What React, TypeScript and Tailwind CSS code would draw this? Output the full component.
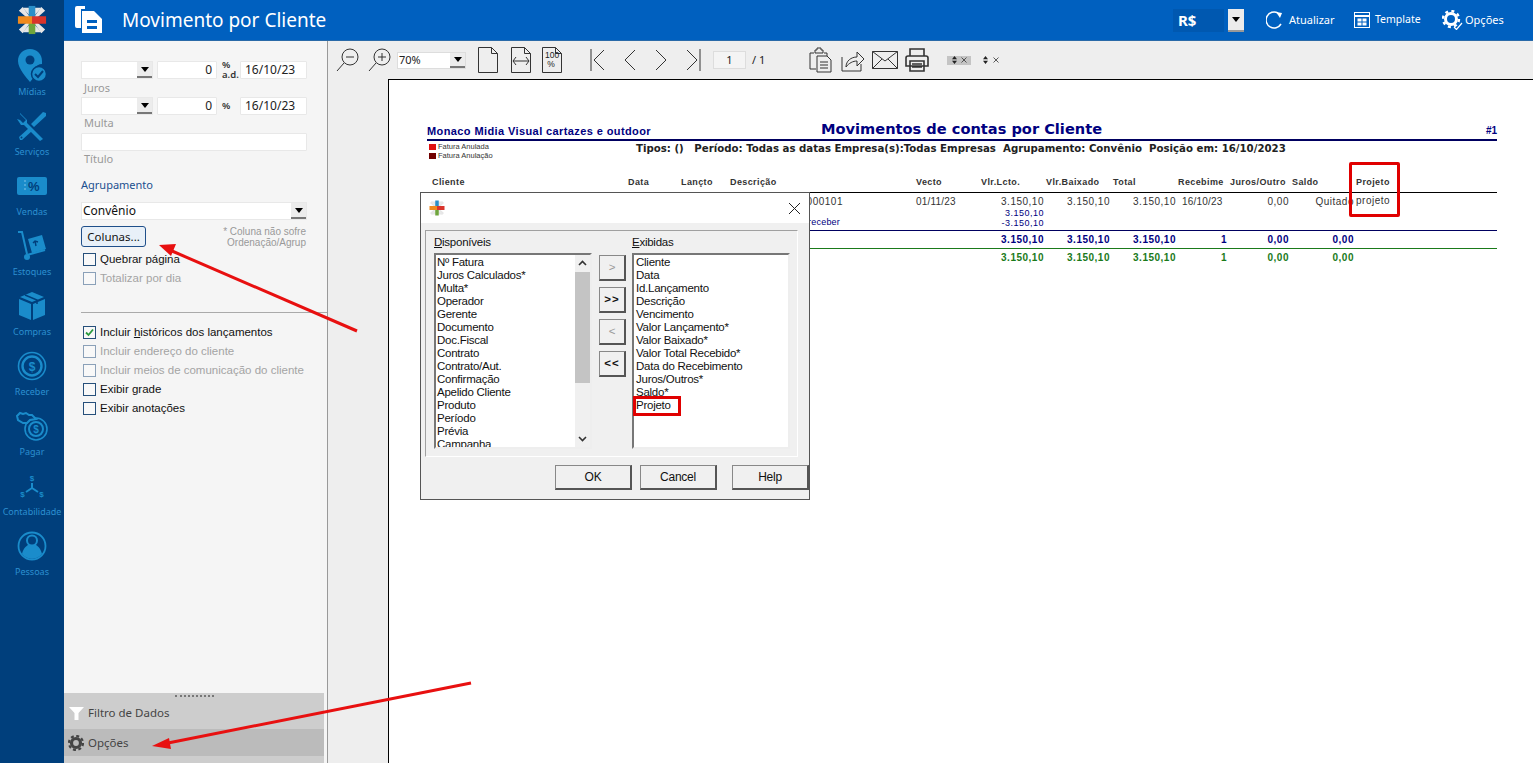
import React from "react";

const Logo = ({ s = 32 }: { s?: number }) => (
  <svg width={s} height={s} viewBox="0 0 32 32">
    <g fill="#e6e6e6">
      <path d="M6 3 L13 3 L15 13 Z M26 3 L19 3 L17 13 Z M6 29 L13 29 L15 19 Z M26 29 L19 29 L17 19 Z" />
      <path d="M2 6 L6 2 L14 13 L10 13 Z M30 6 L26 2 L18 13 L22 13 Z M2 26 L6 30 L14 19 L10 19 Z M30 26 L26 30 L18 19 L22 19 Z" />
    </g>
    <rect x="12.5" y="1" width="7" height="12" fill="#2a8fc8" />
    <rect x="12.5" y="19" width="7" height="12" fill="#6fa53c" />
    <rect x="1" y="12" width="15" height="8" fill="#f08a1d" />
    <rect x="16" y="12" width="15" height="8" fill="#d9342b" />
  </svg>
);

const C = "#1a8ccb";
const side: { label: string; icon: React.ReactNode }[] = [
  {
    label: "Mídias",
    icon: (
      <svg width="30" height="34" viewBox="0 0 30 34">
        <path fill={C} d="M13 0C6 0 1 5 1 12c0 8 9 17 12 21l4-5a9 9 0 0 1 8-13c0-1 0-2 0-3C25 5 20 0 13 0z" />
        <circle cx="13" cy="11" r="4.5" fill="#003f7c" />
        <circle cx="22" cy="25" r="7.5" fill={C} stroke="#003f7c" strokeWidth="1.5" />
        <path d="M18 25l3 3 5-6" fill="none" stroke="#003f7c" strokeWidth="2" />
      </svg>
    ),
  },
  {
    label: "Serviços",
    icon: (
      <svg width="30" height="30" viewBox="0 0 30 30">
        <path fill={C} d="M3 2l7 7 0 3 16 16-3 2L7 14H4L0 8l3 1 3 3 3-3-3-3-3-3z" />
        <path fill={C} d="M29 2l-3-1-12 12 3 3L29 5z M12 17L2 26l1 3 2 0 10-9z" />
        <circle cx="4.5" cy="26.5" r="1" fill="#003f7c" />
      </svg>
    ),
  },
  {
    label: "Vendas",
    icon: (
      <svg width="30" height="18" viewBox="0 0 30 18">
        <rect width="30" height="18" rx="2" fill={C} />
        <path d="M8 3v12" stroke="#7fc4e8" strokeDasharray="2 2" />
        <text x="11" y="14" fontSize="13" fontWeight="700" fill="#003f7c" fontFamily="'Liberation Sans',sans-serif">%</text>
      </svg>
    ),
  },
  {
    label: "Estoques",
    icon: (
      <svg width="30" height="30" viewBox="0 0 30 30">
        <path d="M1 1h4l5 22" stroke={C} strokeWidth="2" fill="none" />
        <path d="M10 24l18-5" stroke={C} strokeWidth="2" />
        <circle cx="10" cy="26" r="3" fill={C} />
        <path fill={C} d="M11 8l14-4 4 14-14 4z" />
        <path d="M19 15l-1-5m-2 2l2-2 3 1" stroke="#003f7c" strokeWidth="1.4" fill="none" />
      </svg>
    ),
  },
  {
    label: "Compras",
    icon: (
      <svg width="26" height="28" viewBox="0 0 26 28">
        <path fill={C} d="M0 7l12 5v16L0 23zM26 7l-12 5v16l12-5zM1 5l12-5 12 5-12 5z" />
        <path d="M6 3l12 5v4" stroke="#003f7c" strokeWidth="1.5" fill="none" />
      </svg>
    ),
  },
  {
    label: "Receber",
    icon: (
      <svg width="30" height="30" viewBox="0 0 30 30">
        <circle cx="15" cy="15" r="13.5" fill="none" stroke={C} strokeWidth="1.6" />
        <circle cx="15" cy="15" r="9.5" fill="none" stroke={C} strokeWidth="2.4" />
        <text x="15" y="19.5" textAnchor="middle" fontSize="12" fontWeight="700" fill={C} fontFamily="'Liberation Sans',sans-serif">$</text>
      </svg>
    ),
  },
  {
    label: "Pagar",
    icon: (
      <svg width="32" height="30" viewBox="0 0 32 30">
        <circle cx="20" cy="18" r="11" fill="none" stroke={C} strokeWidth="1.6" />
        <circle cx="20" cy="18" r="7" fill="none" stroke={C} strokeWidth="2" />
        <text x="20" y="22" textAnchor="middle" fontSize="10" fontWeight="700" fill={C} fontFamily="'Liberation Sans',sans-serif">$</text>
        <path d="M1 5l3-3 3 1 3-1 3 2 3 0 4 4-6 1-3 3-4 0-5-3z" fill="#003f7c" stroke={C} strokeWidth="2" />
      </svg>
    ),
  },
  {
    label: "Contabilidade",
    icon: (
      <svg width="26" height="26" viewBox="0 0 26 26">
        <path d="M13 10v5M13 15l-6 4M13 15l6 4" stroke={C} strokeWidth="2" fill="none" />
        <g fontSize="8" fontWeight="700" fill={C} fontFamily="'Liberation Sans',sans-serif" textAnchor="middle">
          <text x="13" y="8">$</text>
          <text x="3.5" y="24">$</text>
          <text x="22.5" y="24">$</text>
        </g>
      </svg>
    ),
  },
  {
    label: "Pessoas",
    icon: (
      <svg width="30" height="30" viewBox="0 0 30 30">
        <circle cx="15" cy="15" r="13.5" fill="none" stroke={C} strokeWidth="1.8" />
        <path fill={C} d="M5 23c1-5 4-8 6-9a6 6 0 1 1 8 0c2 1 5 4 6 9a13 13 0 0 1-20 0z" />
        <circle cx="15" cy="9.5" r="4" fill="#003f7c" />
      </svg>
    ),
  },
];

const Caret = () => (
  <svg width="8" height="5" viewBox="0 0 8 5"><path d="M0 0h8L4 5z" fill="#000" /></svg>
);

const DropBtn = () => (
  <span className="flex h-full w-[15px] items-center justify-center border-b-2 border-[#777] bg-[#ececec]">
    <Caret />
  </span>
);

const Field = ({ w, children, right }: { w: string; children?: React.ReactNode; right?: boolean }) => (
  <div className={`${w} flex h-[18px] items-center rounded-[1px] border border-[#e8e8e8] bg-white px-[4px] text-[12px] text-[#222] ${right ? "justify-end" : ""}`}>
    {children}
  </div>
);

const Combo = ({ w, children }: { w: string; children?: React.ReactNode }) => (
  <div className={`${w} flex h-[18px] items-center justify-between border border-[#e8e8e8] bg-white pl-[1px] text-[12px] text-[#111]`}>
    <span>{children}</span>
    <DropBtn />
  </div>
);

const Check = ({ label, on, off }: { label: React.ReactNode; on?: boolean; off?: boolean }) => (
  <div className="flex h-[19px] items-center pl-[2px]">
    <span className={`flex h-[13px] w-[13px] items-center justify-center border ${off ? "border-[#8aa0b8]" : "border-[#264f7a]"} bg-[#f8f8f8]`}>
      {on && (
        <svg width="9" height="9" viewBox="0 0 9 9"><path d="M1 4.5l2.5 2.5L8 1.5" fill="none" stroke="#2a9a3e" strokeWidth="1.8" /></svg>
      )}
    </span>
    <span className={`ml-[4px] font-['Liberation_Sans',sans-serif] text-[11.5px] ${off ? "text-[#a4a4a4]" : "text-[#111]"}`}>{label}</span>
  </div>
);

const Ic = ({ children, w, h, vb }: { children: React.ReactNode; w: number; h: number; vb?: string }) => (
  <svg width={w} height={h} viewBox={vb ?? `0 0 ${w} ${h}`} fill="none" stroke="#333" strokeWidth="1" className="shrink-0">
    {children}
  </svg>
);

const UpDown = () => (
  <svg width="5" height="8" viewBox="0 0 5 8"><path d="M0 3.2L2.5 0 5 3.2zM0 4.8L2.5 8 5 4.8z" fill="#222" /></svg>
);
const XMini = () => (
  <svg width="6" height="6" viewBox="0 0 6 6"><path d="M0.5 0.5l5 5M5.5 0.5l-5 5" stroke="#333" strokeWidth="0.8" /></svg>
);

const Toolbar = () => (
  <div className="flex h-[38px] shrink-0 items-center bg-[#eeeeee] pl-[8px] text-[12px] text-[#222]">
    <Ic w={23} h={24}>
      <circle cx="14" cy="9" r="8" /><path d="M8 15L1 23M10 9h8" />
    </Ic>
    <span className="ml-[9px]">
      <Ic w={23} h={24}>
        <circle cx="14" cy="9" r="8" /><path d="M8 15L1 23M10 9h8M14 5v8" />
      </Ic>
    </span>
    <div className="ml-[6px] flex h-[17px] w-[69px] items-center justify-between border border-[#ddd] bg-white pl-[1px] text-[11px]">
      <span>70%</span>
      <DropBtn />
    </div>
    <span className="ml-[12px]">
      <Ic w={20} h={26}><path d="M0.5 0.5h13l6 6v19h-19zM13.5 0.5v6h6" /></Ic>
    </span>
    <span className="ml-[13px]">
      <Ic w={20} h={26}><path d="M0.5 0.5h13l6 6v19h-19zM13.5 0.5v6h6M2 14h16M5 10l-3 4 3 4M15 10l3 4-3 4" /></Ic>
    </span>
    <span className="relative ml-[11px] flex">
      <Ic w={20} h={26}><path d="M0.5 0.5h13l6 6v19h-19zM13.5 0.5v6h6" /></Ic>
      <span className="absolute left-[3px] top-[4px] w-[12px] text-center font-['Liberation_Sans',sans-serif] text-[8.5px] leading-[9px]">100 %</span>
    </span>
    <span className="ml-[28px]">
      <Ic w={15} h={22}><path d="M1 0v22M14 1L4 11l10 10" /></Ic>
    </span>
    <span className="ml-[18px]">
      <Ic w={13} h={22}><path d="M12 1L2 11l10 10" /></Ic>
    </span>
    <span className="ml-[19px]">
      <Ic w={13} h={22}><path d="M1 1l10 10L1 21" /></Ic>
    </span>
    <span className="ml-[18px]">
      <Ic w={15} h={22}><path d="M14 0v22M1 1l10 10L1 21" /></Ic>
    </span>
    <div className="ml-[12px] flex h-[18px] w-[33px] items-center justify-center border border-[#ddd] bg-[#f4f4f4] text-[11px]">1</div>
    <span className="ml-[6px] text-[11px]">/ 1</span>
    <span className="ml-[44px]">
      <Ic w={23} h={26}><path d="M5 6H1v16h6M15 6h3v3M6 3h2V1h4v2h2v3H6zM8 9h10l4 4v12H8zM11 15h8M11 18h8M11 21h8" /></Ic>
    </span>
    <span className="ml-[9px]">
      <Ic w={24} h={24}><path d="M1 9v14h19v-7M5 19c0-6 5-10 11-10V4l7 7-7 7v-5c-4 0-8 2-11 6z" /></Ic>
    </span>
    <span className="ml-[7px]">
      <Ic w={26} h={18}><path d="M0.5 0.5h25v17h-25zM0.5 0.5L13 10 25.5 0.5M0.5 17.5L10 8M25.5 17.5L16 8" /></Ic>
    </span>
    <span className="ml-[7px]">
      <Ic w={24} h={24}>
        <path d="M5 8V1h14v7M3 8h18a2 2 0 0 1 2 2v8H1v-8a2 2 0 0 1 2-2zM5 13h14v10H5zM7 16h10M7 19h10" strokeWidth="1.6" />
      </Ic>
    </span>
    <div className="ml-[18px] flex h-[9px] w-[24px] items-center justify-center gap-[4px] bg-[#c4c4c4]">
      <UpDown />
      <XMini />
    </div>
    <div className="ml-[9px] flex h-[9px] w-[22px] items-center justify-center gap-[5px]">
      <UpDown />
      <XMini />
    </div>
  </div>
);

const grid = "grid grid-cols-[201px_53px_49px_186px_65px_63px_66px_66px_51px_62px_65px_1fr]";

const Totals = ({ cls }: { cls: string }) => (
  <div className={`${grid} items-center pb-[1px] text-[10px] font-bold tracking-[0.5px] ${cls}`}>
    <span className="col-start-6 text-right">3.150,10</span>
    <span className="text-right">3.150,10</span>
    <span className="text-right">3.150,10</span>
    <span className="text-right">1</span>
    <span className="text-right">0,00</span>
    <span className="text-right">0,00</span>
  </div>
);

const Report = () => (
  <div className="w-[1070px] font-['Liberation_Sans',sans-serif]">
    <div className="mt-[41px] flex h-[20px] items-end border-b-2 border-[#000060]">
      <span className="w-[394px] shrink-0 pb-[1px] text-[11px] font-bold tracking-[0.4px] text-[#000080] leading-[14px]">Monaco Midia Visual cartazes e outdoor</span>
      <span className="shrink-0 whitespace-nowrap font-['DejaVu_Sans',sans-serif] text-[14.6px] font-bold leading-[20px] text-[#000080]">Movimentos de contas por Cliente</span>
      <span className="flex-1 pb-[1px] text-right text-[10px] font-bold text-[#000080] leading-[14px]">#1</span>
    </div>
    <div className="flex h-[32px]">
      <div className="w-[209px] pl-[2px] pt-[1px]">
        <div className="flex h-[9px] items-center gap-[2px] text-[7.5px] text-[#333]"><span className="h-[6px] w-[7px] bg-[#e01010]" />Fatura Anulada</div>
        <div className="flex h-[9px] items-center gap-[2px] text-[7.5px] text-[#333]"><span className="h-[6px] w-[7px] bg-[#700000]" />Fatura Anulação</div>
      </div>
      <div className="whitespace-pre pt-[1px] font-['DejaVu_Sans',sans-serif] text-[10.2px] font-bold leading-[14px] text-[#222]">Tipos: ()   Período: Todas as datas Empresa(s):Todas Empresas  Agrupamento: Convênio  Posição em: 16/10/2023</div>
    </div>
    <div className={`${grid} h-[20px] items-center border-b border-black pt-[1px] text-[9px] font-bold tracking-[0.4px] text-[#333]`}>
      <span className="pl-[5px]">Cliente</span>
      <span>Data</span>
      <span>Lançto</span>
      <span>Descrição</span>
      <span>Vecto</span>
      <span>Vlr.Lcto.</span>
      <span className="pl-[2px]">Vlr.Baixado</span>
      <span className="pl-[3px]">Total</span>
      <span className="pl-[2px] whitespace-nowrap">Recebime</span>
      <span className="pl-[3px] whitespace-nowrap">Juros/Outro</span>
      <span className="pl-[3px]">Saldo</span>
      <span className="pl-[2px]">Projeto</span>
    </div>
    <div className={`${grid} h-[38px] border-b border-[#000060] pt-[2px] text-[10px] tracking-[0.5px] text-[#333]`}>
      <span /><span /><span />
      <span className="col-start-4 text-right">
        <span className="block pr-[73px] leading-[13px]">0000101</span>
        <span className="mt-[9px] block pr-[76px] text-[9px] leading-[11px] tracking-[0.2px] text-[#000080]">Fatura a receber</span>
      </span>
      <span className="leading-[13px] tracking-[0.2px]">01/11/23</span>
      <span className="text-right leading-[13px]">
        3.150,10
        <span className="block text-[9px] leading-[10px] text-[#000080]">3.150,10</span>
        <span className="block text-[9px] leading-[11px] text-[#000080]">-3.150,10</span>
      </span>
      <span className="text-right leading-[13px]">3.150,10</span>
      <span className="text-right leading-[13px]">3.150,10</span>
      <span className="pl-[6px] leading-[13px] tracking-[0.2px]">16/10/23</span>
      <span className="text-right leading-[13px]">0,00</span>
      <span className="text-right leading-[13px]">Quitado</span>
      <span className="pl-[2px] leading-[12px]">projeto</span>
    </div>
    <Totals cls="h-[18px] border-b border-[#1a7a1a] text-[#000080]" />
    <Totals cls="h-[18px] text-[#1a7a1a]" />
  </div>
);

const left = ["Nº Fatura", "Juros Calculados*", "Multa*", "Operador", "Gerente", "Documento", "Doc.Fiscal", "Contrato", "Contrato/Aut.", "Confirmação", "Apelido Cliente", "Produto", "Período", "Prévia", "Campanha"];
const right = ["Cliente", "Data", "Id.Lançamento", "Descrição", "Vencimento", "Valor Lançamento*", "Valor Baixado*", "Valor Total Recebido*", "Data do Recebimento", "Juros/Outros*", "Saldo*", "Projeto"];

const Win = ({ w, h, children, cls }: { w: string; h: string; children: React.ReactNode; cls?: string }) => (
  <button className={`${w} ${h} flex items-center justify-center border-b-2 border-r-2 border-t border-l border-b-[#555] border-r-[#555] border-t-[#888] border-l-[#888] bg-[#f0f0f0] ${cls ?? "text-[#111]"}`}>
    {children}
  </button>
);

const Dialog = () => (
  <div className="absolute left-[420px] top-[192px] flex h-[308px] w-[390px] flex-col border border-[#555] bg-[#f0f0f0] font-['Liberation_Sans',sans-serif] text-[11.5px] tracking-[-0.25px] text-[#111]">
    <div className="flex h-[30px] shrink-0 items-center justify-between bg-white pl-[8px] pr-[8px]">
      <Logo s={16} />
      <svg width="13" height="13" viewBox="0 0 13 13"><path d="M1 1l11 11M12 1L1 12" stroke="#222" /></svg>
    </div>
    <div className="ml-[4px] mt-[7px] flex h-[227px] w-[373px] border border-[#a0a0a0] border-r-white border-b-white pl-[8px] pt-[3px]">
      <div className="w-[158px]">
        <div className="h-[19px] leading-[16px]"><u>D</u>isponíveis</div>
        <div className="flex h-[196px] border-b-2 border-l-2 border-r-2 border-t-2 border-b-[#eee] border-r-[#eee] border-l-[#777] border-t-[#777] bg-white">
          <div className="flex-1 overflow-hidden pl-[1px] pt-[1px] leading-[13px]">
            {left.map((t) => <div key={t} className="h-[13px] whitespace-nowrap">{t}</div>)}
          </div>
          <div className="relative flex w-[15px] flex-col items-center justify-between bg-[#f0f0f0]">
            <svg className="mt-[5px]" width="9" height="6" viewBox="0 0 9 6"><path d="M1 5l3.5-3.5L8 5" fill="none" stroke="#333" strokeWidth="1.6" /></svg>
            <div className="absolute left-0 top-[17px] h-[111px] w-[15px] bg-[#c4c4c4]" />
            <svg className="mb-[5px]" width="9" height="6" viewBox="0 0 9 6"><path d="M1 1l3.5 3.5L8 1" fill="none" stroke="#333" strokeWidth="1.6" /></svg>
          </div>
        </div>
      </div>
      <div className="ml-[7px] mt-[21px] flex w-[27px] flex-col gap-[6px]">
        <Win w="w-[27px]" h="h-[26px]" cls="text-[#999]">&gt;</Win>
        <Win w="w-[27px]" h="h-[26px]" cls="font-bold tracking-[1px] text-[#111]">&gt;&gt;</Win>
        <Win w="w-[27px]" h="h-[26px]" cls="text-[#999]">&lt;</Win>
        <Win w="w-[27px]" h="h-[26px]" cls="font-bold tracking-[1px] text-[#111]">&lt;&lt;</Win>
      </div>
      <div className="ml-[6px] w-[158px]">
        <div className="h-[19px] leading-[16px]"><u>E</u>xibidas</div>
        <div className="h-[196px] overflow-hidden border-b-2 border-l-2 border-r-2 border-t-2 border-b-[#eee] border-r-[#eee] border-l-[#777] border-t-[#777] bg-white pl-[2px] pt-[1px] leading-[13px]">
          {right.map((t) => <div key={t} className="h-[13px] whitespace-nowrap">{t}</div>)}
        </div>
      </div>
    </div>
    <div className="ml-[134px] mt-[8px] flex text-[12px]">
      <Win w="w-[77px]" h="h-[25px]">OK</Win>
      <Win w="w-[77px]" h="h-[25px] ml-[8px]">Cancel</Win>
      <Win w="w-[77px]" h="h-[25px] ml-[15px]">Help</Win>
    </div>
  </div>
);

export default function App() {
  return (
    <div className="relative flex h-[763px] w-[1533px] overflow-hidden bg-white font-['Noto_Sans',sans-serif]">
      <aside className="flex w-16 shrink-0 flex-col items-center bg-[#003f7c]">
        <div className="flex h-[41px] w-full items-center justify-center pb-[1px]"><Logo s={30} /></div>
        {side.map((s) => (
          <div key={s.label} className="flex h-[60px] w-full shrink-0 flex-col items-center justify-end pb-[2px]">
            <div className="flex flex-1 items-center justify-center pt-[8px]">{s.icon}</div>
            <span className="mt-[2px] whitespace-nowrap text-[9px] leading-[14px] text-[#2c8fd0]">{s.label}</span>
          </div>
        ))}
      </aside>
      <div className="flex min-w-0 flex-1 flex-col">
        <header className="flex h-[41px] shrink-0 items-center border-b border-[#2a6aa8] bg-[#0060bf] text-white">
          <svg className="ml-[11px]" width="28" height="28" viewBox="0 0 28 28">
            <path d="M0 2a2 2 0 0 1 2-2h8v3H6v19H2a2 2 0 0 1-2-2z" fill="#fff" />
            <path d="M7 5h12l8 8v14H7z" fill="#fff" />
            <rect x="12" y="14" width="10" height="3" fill="#0060bf" />
            <rect x="12" y="20" width="10" height="3" fill="#0060bf" />
          </svg>
          <h1 className="ml-[19px] text-[19px] font-normal text-white">Movimento por Cliente</h1>
          <div className="ml-auto flex h-[23px] w-[51px] items-center bg-[#0058b0] pl-[5px] text-[15px] font-bold">R$</div>
          <div className="ml-[4px] flex h-[23px] w-[16px] items-center justify-center border-b-2 border-[#999] bg-[#ececec]"><Caret /></div>
          <svg className="ml-[22px]" width="18" height="18" viewBox="0 0 18 18" fill="none" stroke="#fff" strokeWidth="1.5"><path d="M15 13A8 8 0 1 1 12 2" /><path d="M10 1l6 1-2 5" fill="#fff" strokeWidth="0" /></svg>
          <span className="ml-[5px] w-[45px] whitespace-nowrap text-[11px]">Atualizar</span>
          <svg className="ml-[20px]" width="16" height="16" viewBox="0 0 16 16" fill="none" stroke="#fff"><rect x="0.5" y="0.5" width="15" height="15" /><path d="M1 4h14" strokeWidth="2" /><rect x="4" y="7" width="3" height="2" fill="#fff" /><rect x="9" y="7" width="3" height="2" fill="#fff" /><rect x="4" y="11" width="3" height="2" fill="#fff" /><rect x="9" y="11" width="3" height="2" fill="#fff" /></svg>
          <span className="ml-[5px] w-[45px] whitespace-nowrap text-[10.5px]">Template</span>
          <svg className="ml-[22px]" width="21" height="20" viewBox="0 0 21 20" fill="none"><circle cx="9" cy="9" r="5.5" stroke="#fff" strokeWidth="3" /><circle cx="9" cy="9" r="8" stroke="#fff" strokeWidth="2.4" strokeDasharray="3 3.3" /><path d="M12 17l2.5 2.5L20 13" stroke="#fff" strokeWidth="1.2" /></svg>
          <span className="ml-[2px] mr-[30px] w-[38px] whitespace-nowrap text-[11px]">Opções</span>
        </header>
        <div className="flex min-h-0 flex-1">
          <div className="flex w-[264px] shrink-0 flex-col border-r border-[#999] bg-[#f5f5f5] text-[12px]">
            <div className="flex-1 pl-[17px] pt-[20px]">
              <div className="flex h-[18px] w-[226px] items-center">
                <Combo w="w-[72px]" />
                <div className="ml-[4px]"><Field w="w-[60px]" right>0</Field></div>
                <div className="w-[23px] pl-[5px] text-[9.5px] font-semibold leading-[10px] text-[#333]">%<br />a.d.</div>
                <Field w="w-[67px]">16/10/23</Field>
              </div>
              <div className="h-[18px] pl-[3px] text-[11px] leading-[17px] text-[#999]">Juros</div>
              <div className="flex h-[18px] w-[226px] items-center">
                <Combo w="w-[72px]" />
                <div className="ml-[4px]"><Field w="w-[60px]" right>0</Field></div>
                <div className="w-[23px] pl-[5px] text-[9.5px] font-semibold text-[#333]">%</div>
                <Field w="w-[67px]">16/10/23</Field>
              </div>
              <div className="h-[18px] pl-[3px] text-[11px] leading-[16px] text-[#999]">Multa</div>
              <Field w="w-[226px]" />
              <div className="h-[18px] pl-[3px] text-[11px] leading-[16px] text-[#999]">Título</div>
              <div className="mt-[8px] h-[16px] text-[11px] leading-[16px] text-[#1b4f8f]">Agrupamento</div>
              <div className="mt-[9px]"><Combo w="w-[226px]">Convênio</Combo></div>
              <div className="mt-[6px] flex w-[226px] items-start justify-between">
                <button className="h-[21px] w-[65px] rounded-[3px] border border-[#1f4f8a] bg-[#e8f0f8] text-[11.5px] text-[#111]">Colunas...</button>
                <div className="pr-[1px] text-right font-['Liberation_Sans',sans-serif] text-[10px] leading-[11px] text-[#999]">* Coluna não sofre<br />Ordenação/Agrup</div>
              </div>
              <div className="mt-[2px]">
                <Check label="Quebrar página" />
                <Check label="Totalizar por dia" off />
              </div>
              <div className="mt-[24px] h-px bg-[#aaa]" />
              <div className="mt-[10px]">
                <Check on label={<>Incluir <u>h</u>istóricos dos lançamentos</>} />
                <Check off label="Incluir endereço do cliente" />
                <Check off label="Incluir meios de comunicação do cliente" />
                <Check label="Exibir grade" />
                <Check label="Exibir anotações" />
              </div>
            </div>
            <div className="mr-[3px] h-[70px] shrink-0 bg-[#cdcdcd] text-[11.5px] text-[#444]">
              <div className="flex h-[36px] flex-col">
                <div className="mx-auto mt-[2px] h-[2px] w-[39px] border-t-2 border-dotted border-[#777]" />
                <div className="flex flex-1 items-center pl-[5px]">
                  <svg width="15" height="13" viewBox="0 0 15 13"><path d="M0 0h15L9.5 6v7h-4V6z" fill="#fff" /></svg>
                  <span className="ml-[4px]">Filtro de Dados</span>
                </div>
              </div>
              <div className="flex h-[27px] items-center bg-[#bbbbbb] pl-[4px]">
                <svg width="16" height="16" viewBox="0 0 16 16"><circle cx="8" cy="8" r="4.5" fill="none" stroke="#444" strokeWidth="3.2" /><circle cx="8" cy="8" r="7" fill="none" stroke="#444" strokeWidth="2.2" strokeDasharray="3 2.5" /></svg>
                <span className="ml-[4px]">Opções</span>
              </div>
            </div>
          </div>
          <div className="flex min-w-0 flex-1 flex-col bg-[#eeeeee]">
            <Toolbar />
            <div className="flex min-h-0 flex-1 pl-[60px]">
              <div className="flex-1 border-l border-t border-black bg-white pl-[38px]">
                <Report />
              </div>
            </div>
          </div>
        </div>
      </div>
      <Dialog />
      <div className="pointer-events-none absolute left-[1349px] top-[162px] h-[55px] w-[51px] rounded-[2px] border-[3px] border-[#e00000]" />
      <div className="pointer-events-none absolute left-[633px] top-[396px] h-[20px] w-[48px] border-[3px] border-[#e00000]" />
      <svg className="pointer-events-none absolute left-0 top-0" width="1533" height="763" viewBox="0 0 1533 763">
        <path d="M357 331L172 251" stroke="#e81010" strokeWidth="3" />
        <path d="M159 245l17-1-5 12z" fill="#e81010" />
        <path d="M471 683L168 743" stroke="#e81010" strokeWidth="3" />
        <path d="M152 746l17-8 2 11z" fill="#e81010" />
      </svg>
    </div>
  );
}
